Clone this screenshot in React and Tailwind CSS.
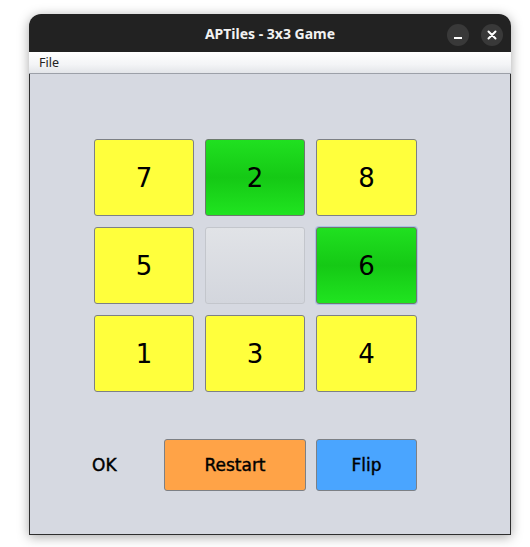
import React from "react";

const yellow = "bg-[#ffff3c] border border-[#7d8085]";
const green =
  "bg-[linear-gradient(to_bottom,#20e020_0%,#15c915_50%,#20e420_100%)] border border-[#6c7a6c]";
const empty =
  "bg-[linear-gradient(to_bottom,#e1e3e7,#d3d6dd)] border border-[#c3c6cc]";

function Tile({ n, kind, focus }) {
  const cls = kind === "y" ? yellow : kind === "g" ? green : empty;
  return (
    <div
      className={`h-[77px] rounded-[3px] flex items-center justify-center text-[26px] text-black pt-[1px] ${cls} ${
        focus ? "border-[#5f7fb5] ring-1 ring-[#a9c1e3]" : ""
      }`}
      style={{ fontFamily: '"DejaVu Sans", sans-serif' }}
    >
      {n}
    </div>
  );
}

export default function App() {
  return (
    <div className="w-[530px] h-[547px] bg-white overflow-hidden">
      <div className="ml-[29px] mt-[14px] w-[482px] h-[521px] flex flex-col rounded-t-[12px] shadow-[0_2px_12px_rgba(0,0,0,0.35)]">
        <div className="relative h-[38px] bg-[#222222] rounded-t-[12px] flex items-center justify-center">
          <span
            className="text-[14px] font-bold text-[#f2f2f2]"
            style={{ fontFamily: '"Noto Sans", "Open Sans", sans-serif' }}
          >
            APTiles - 3x3 Game
          </span>
          <div className="absolute right-[8px] top-[10px] flex gap-[12px]">
            <div className="w-[22px] h-[22px] rounded-full bg-[#393939] flex items-center justify-center">
              <div className="w-[8px] h-[2px] bg-white mt-[5px]" />
            </div>
            <div className="w-[22px] h-[22px] rounded-full bg-[#393939] flex items-center justify-center">
              <svg width="10" height="10" viewBox="0 0 10 10">
                <path d="M1.5 1.5 L8.5 8.5 M8.5 1.5 L1.5 8.5" stroke="white" strokeWidth="2" strokeLinecap="round" />
              </svg>
            </div>
          </div>
        </div>
        <div className="h-[22px] bg-[linear-gradient(to_bottom,#ffffff,#f3f4f6_60%,#e3e5e9)] border-b border-[#9ca0a8] flex items-center pl-[10px] pt-[1px]">
          <span
            className="text-[12.5px] text-[#222]"
            style={{ fontFamily: '"Noto Sans", "Open Sans", sans-serif' }}
          >
            File
          </span>
        </div>
        <div className="flex-1 bg-[#d6d9e1] border-x border-b border-[#2e2e2e] pl-[64px] pt-[65px]">
          <div className="grid grid-cols-[100px_100px_101px] gap-[11px]">
            <Tile n="7" kind="y" />
            <Tile n="2" kind="g" />
            <Tile n="8" kind="y" />
            <Tile n="5" kind="y" />
            <Tile n="" kind="e" />
            <Tile n="6" kind="g" focus />
            <Tile n="1" kind="y" />
            <Tile n="3" kind="y" />
            <Tile n="4" kind="y" />
          </div>
          <div
            className="mt-[47px] flex items-center text-[17px] text-black [-webkit-text-stroke:0.4px_black]"
            style={{ fontFamily: '"DejaVu Sans", sans-serif' }}
          >
            <div className="w-[72px] -ml-[2px] pt-[2px]">OK</div>
            <div className="w-[142px] h-[52px] rounded-[3px] bg-[#ffa347] border border-[#7d8085] flex items-center justify-center pt-[2px]">
              Restart
            </div>
            <div className="ml-[10px] w-[101px] h-[52px] rounded-[3px] bg-[#4aa5ff] border border-[#7d8085] flex items-center justify-center pt-[2px]">
              Flip
            </div>
          </div>
        </div>
      </div>
    </div>
  );
}
